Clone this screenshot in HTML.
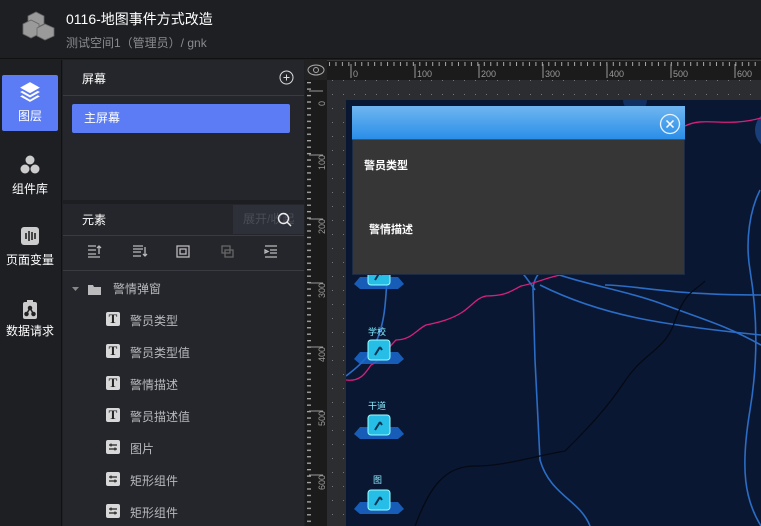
<!DOCTYPE html>
<html><head><meta charset="utf-8"><style>
*{margin:0;padding:0;box-sizing:border-box}
html,body{width:761px;height:526px;overflow:hidden}
body{background:#1f2024;font-family:"Liberation Sans","Noto Sans CJK SC",sans-serif;position:relative;color:#fff}
.abs{position:absolute}
.nav{left:0;top:60px;width:62px;height:466px;background:#1e1f23;border-right:1px solid #111}
.nv{position:absolute;left:2px;width:56px;text-align:center;font-size:12px;color:#fff}
.panel{left:63px;top:60px;width:241px;height:466px;background:#25262b}
.tl{position:absolute;font-size:12px;color:#b8b9bd}
.ti{position:absolute;left:106px;width:14px;height:14px;background:#d8d8d8;border-radius:2px;color:#222;font:bold 13px/14px "Liberation Serif",serif;text-align:center}
</style></head><body>
<div class="abs" style="left:0;top:0;width:761px;height:59px;background:#1e1f23;border-bottom:1px solid #111"></div>
<svg class="abs" style="left:20px;top:10px" width="36" height="34" viewBox="0 0 36 34"><g fill="#9a9a9a" stroke="#666" stroke-width=".8"><path d="M8 6l8-4 8 4v8l-8 4-8-4z"/><path d="M3 14l8-4 8 4v10l-8 4-8-4z"/><path d="M17 18l8-4 9 4v8l-9 4-8-4z"/></g></svg>
<div class="abs" style="left:66px;top:9px;font-size:14px;color:#fff">0116-地图事件方式改造</div>
<div class="abs" style="left:66px;top:34px;font-size:12px;color:#8a8b8f">测试空间1（管理员）/ gnk</div>
<div class="abs nav"></div>
<div class="abs" style="left:2px;top:75px;width:56px;height:56px;background:#5b7cf5;border-radius:2px"></div>
<svg class="abs" style="left:19px;top:81px" width="22" height="22" viewBox="0 0 20 20"><g fill="#fff"><path d="M10 1l9 5-9 5-9-5z"/><path d="M1 10l2-1 7 4 7-4 2 1-9 5z"/><path d="M1 14l2-1 7 4 7-4 2 1-9 5z"/></g></svg>
<div class="nv" style="top:107px">图层</div>
<svg class="abs" style="left:19px;top:155px" width="22" height="20"><g fill="#ccc"><circle cx="11" cy="5" r="4.5"/><circle cx="6" cy="14" r="4.5"/><circle cx="16" cy="14" r="4.5"/></g></svg>
<div class="nv" style="top:180px">组件库</div>
<svg class="abs" style="left:21px;top:227px" width="18" height="18"><rect width="18" height="18" rx="3" fill="#ccc"/><g stroke="#222" stroke-width="1.6"><path d="M5 6v6M8 4v10M11 5v8M14 6v6"/></g></svg>
<div class="nv" style="top:251px">页面变量</div>
<svg class="abs" style="left:22px;top:300px" width="16" height="20"><rect x="1" y="2" width="14" height="17" rx="2" fill="#ccc"/><rect x="5" y="0" width="6" height="4" fill="#ccc"/><g stroke="#222" stroke-width="1.5" fill="#222"><circle cx="8" cy="8" r="1.5"/><circle cx="4.5" cy="14" r="1.5"/><circle cx="11.5" cy="14" r="1.5"/><path d="M8 8L4.5 14M8 8l3.5 6" fill="none"/></g></svg>
<div class="nv" style="top:322px">数据请求</div>
<div class="abs panel"></div>
<div class="abs" style="left:82px;top:70px;font-size:12px">屏幕</div>
<svg class="abs" style="left:279px;top:70px" width="15" height="15"><circle cx="7.5" cy="7.5" r="6.5" fill="none" stroke="#ddd"/><path d="M7.5 4.5v6M4.5 7.5h6" stroke="#ddd"/></svg>
<div class="abs" style="left:63px;top:95px;width:241px;height:1px;background:#3a3b40"></div>
<div class="abs" style="left:72px;top:104px;width:218px;height:29px;background:#5b7cf5;border-radius:2px;font-size:12px;line-height:29px;padding-left:12px">主屏幕</div>
<div class="abs" style="left:63px;top:200px;width:241px;height:4px;background:#1d1e22"></div>
<div class="abs" style="left:82px;top:211px;font-size:12px">元素</div>
<div class="abs" style="left:233px;top:205px;width:71px;height:29px;background:#2d3039;color:#4a4d55;font-size:12px;line-height:29px;padding-left:10px;overflow:hidden;white-space:nowrap">展开/收起</div>
<svg class="abs" style="left:277px;top:212px" width="15" height="15"><circle cx="6.5" cy="6.5" r="5" fill="none" stroke="#eee" stroke-width="1.4"/><path d="M10 10l4 4" stroke="#eee" stroke-width="1.4"/></svg>
<div class="abs" style="left:63px;top:235px;width:241px;height:1px;background:#3a3b40"></div>
<svg class="abs" style="left:85px;top:243px" width="200" height="16"><g stroke="#bbb" stroke-width="1.3" fill="none"><path d="M3 3h8M3 7h8M3 11h8M3 14h12M14 11V3M12 5l2-2 2 2"/><path d="M48 3h10M48 6h10M48 9h8M48 13h8M60 4v9M58 11l2 2 2-2"/><rect x="92" y="3" width="12" height="11"/><rect x="95" y="6" width="6" height="5"/><rect x="137" y="3" width="8" height="7" stroke="#666"/><rect x="140" y="7" width="8" height="7" stroke="#666"/><path d="M180 3h12M185 7h7M185 10h7M180 14h12M180 7l3 1.5-3 1.5z"/></g></svg>
<div class="abs" style="left:63px;top:270px;width:241px;height:1px;background:#3a3b40"></div>
<svg class="abs" style="left:72px;top:284px" width="30" height="12"><path d="M0 3h7l-3.5 4z" fill="#888"/><path d="M16 1h5l1 2h7v8H16z" fill="#bbb"/></svg>
<div class="tl" style="left:113px;top:280px">警情弹窗</div>
<span class="ti" style="top:312px">T</span><div class="tl" style="left:130px;top:312px">警员类型</div>
<span class="ti" style="top:344px">T</span><div class="tl" style="left:130px;top:344px">警员类型值</div>
<span class="ti" style="top:376px">T</span><div class="tl" style="left:130px;top:376px">警情描述</div>
<span class="ti" style="top:408px">T</span><div class="tl" style="left:130px;top:408px">警员描述值</div>
<svg class="abs" style="left:106px;top:440px" width="14" height="14"><rect width="14" height="14" rx="2" fill="#d8d8d8"/><path d="M3 5h8M3 9h8M5 3.5v3M9 7.5v3" stroke="#222" stroke-width="1.2"/></svg><div class="tl" style="left:130px;top:440px">图片</div>
<svg class="abs" style="left:106px;top:472px" width="14" height="14"><rect width="14" height="14" rx="2" fill="#d8d8d8"/><path d="M3 5h8M3 9h8M5 3.5v3M9 7.5v3" stroke="#222" stroke-width="1.2"/></svg><div class="tl" style="left:130px;top:472px">矩形组件</div>
<svg class="abs" style="left:106px;top:504px" width="14" height="14"><rect width="14" height="14" rx="2" fill="#d8d8d8"/><path d="M3 5h8M3 9h8M5 3.5v3M9 7.5v3" stroke="#222" stroke-width="1.2"/></svg><div class="tl" style="left:130px;top:504px">矩形组件</div>
<div class="abs" style="left:305px;top:60px;width:456px;height:466px;background:#2b2d31"></div>
<svg class="abs" style="left:305px;top:60px" width="456" height="466">
<defs>
<pattern id="ht" x="22" width="6.45" height="20" patternUnits="userSpaceOnUse"><rect x="2" y="2" width="1" height="4" fill="#aaa"/></pattern>
<pattern id="vt" y="20" width="22" height="6.45" patternUnits="userSpaceOnUse"><rect x="2" y="2" width="4" height="1.3" fill="#aaa"/></pattern>
<pattern id="dots" x="0" y="0" width="11" height="14" patternUnits="userSpaceOnUse"><rect x="5" y="6" width="1" height="1" fill="#777"/></pattern>
<clipPath id="mc"><rect x="41" y="40" width="415" height="426"/></clipPath>
</defs>
<rect x="0" y="0" width="22" height="466" fill="#1b1b1c"/>
<rect x="0" y="0" width="456" height="20" fill="#1b1b1c"/>
<rect x="0" y="0" width="456" height="1" fill="#3a3a3a"/>
<rect x="22" y="20" width="434" height="446" fill="url(#dots)"/>
<rect x="22" y="0" width="434" height="12" fill="url(#ht)"/>
<rect x="0" y="20" width="11" height="446" fill="url(#vt)"/>
<g stroke="#999"><path d="M46 4v14M110 4v14M174 4v14M238 4v14M302 4v14M366 4v14M430 4v14"/><path d="M4 31h14M4 95h14M4 159h14M4 223h14M4 287h14M4 351h14M4 415h14"/></g>
<g fill="#999" font-size="9" font-family="Liberation Sans"><text x="48" y="17">0</text><text x="112" y="17">100</text><text x="176" y="17">200</text><text x="240" y="17">300</text><text x="304" y="17">400</text><text x="368" y="17">500</text><text x="432" y="17">600</text>
<g transform="rotate(-90)"><text x="-46" y="20">0</text><text x="-110" y="20">100</text><text x="-174" y="20">200</text><text x="-238" y="20">300</text><text x="-302" y="20">400</text><text x="-366" y="20">500</text><text x="-430" y="20">600</text></g></g>
<rect x="0" y="0" width="22" height="20" fill="#222"/>
<ellipse cx="11" cy="10" rx="8" ry="5" fill="none" stroke="#aaa"/><circle cx="11" cy="10" r="2.5" fill="none" stroke="#aaa"/>
<rect x="41" y="40" width="415" height="426" fill="#0a1733"/>
<g clip-path="url(#mc)">
<circle cx="470" cy="70" r="20" fill="#1a3f78"/>
<circle cx="330" cy="40" r="12" fill="#123062"/>
<g fill="none" stroke="#2b6cc4" stroke-width="1.6">
<path d="M285 466C275 440 245 435 235 400L230 300L228 230C228 215 240 205 260 190"/>
<path d="M235 225c60 30 120 40 221 50"/>
<path d="M240 210c40 15 80 20 120 35 40 15 60 20 96 40"/>
<path d="M300 225c30 0 60 10 156 10"/>
<path d="M455 130c-10 20-15 50-10 80s10 80 0 140-5 90 11 116"/>
<path d="M41 316c20-15 35-30 39-70s2-80 5-140"/>
<path d="M230 230c-20-30-40-40-50-120"/>
</g>
<path d="M110 466c15-40 30-60 60-60s60-10 90-15c20-20 40-40 60-70s40-30 50-60 20-30 30-40" fill="none" stroke="#050a14" stroke-width="1.3"/>
<path d="M41 320c15 2 20-8 25-15 10-5 15-15 25-25 15 0 20-10 30-15 15-3 25-6 35-12 10-6 15-15 25-17 20 0 25-5 35-10 15-3 25-8 35-10 20-5 30-10 40-12 10-10 10-25 5-30M380 66c20-10 40 2 76-8" fill="none" stroke="#d8207a" stroke-width="1.3"/>
</g>
<g>
<g transform="translate(49,205)"><path d="M0 19l6-7h38l6 7-6 5H6z" fill="#1a6ad0" opacity=".85"/><rect x="14" y="0" width="22" height="20" rx="3" fill="#26bde6" stroke="#9ff"/><path d="M21 15l5-8m0 0l2 3" stroke="#0a3350" stroke-width="2" fill="none"/></g>
<g transform="translate(49,280)"><path d="M0 19l6-7h38l6 7-6 5H6z" fill="#1a6ad0" opacity=".85"/><rect x="14" y="0" width="22" height="20" rx="3" fill="#26bde6" stroke="#9ff"/><path d="M21 15l5-8m0 0l2 3" stroke="#0a3350" stroke-width="2" fill="none"/></g>
<g transform="translate(49,355)"><path d="M0 19l6-7h38l6 7-6 5H6z" fill="#1a6ad0" opacity=".85"/><rect x="14" y="0" width="22" height="20" rx="3" fill="#26bde6" stroke="#9ff"/><path d="M21 15l5-8m0 0l2 3" stroke="#0a3350" stroke-width="2" fill="none"/></g>
<g transform="translate(49,430)"><path d="M0 19l6-7h38l6 7-6 5H6z" fill="#1a6ad0" opacity=".85"/><rect x="14" y="0" width="22" height="20" rx="3" fill="#26bde6" stroke="#9ff"/><path d="M21 15l5-8m0 0l2 3" stroke="#0a3350" stroke-width="2" fill="none"/></g>
</g>
<g fill="#8ef" font-size="9" font-family="Liberation Sans,Noto Sans CJK SC"><text x="63" y="275">学校</text><text x="63" y="349">干道</text><text x="68" y="423">图</text></g>
</svg>
<div class="abs" style="left:352px;top:106px;width:333px;height:169px;background:#363636;border:1px solid #1d2a44"></div>
<div class="abs" style="left:352px;top:106px;width:333px;height:34px;background:linear-gradient(#6fb6f0,#2a8ee8);border-bottom:1px solid #1a5aa0"></div>
<svg class="abs" style="left:659px;top:113px" width="22" height="22"><circle cx="11" cy="11" r="9.5" fill="none" stroke="#e8f2ff" stroke-width="1.3"/><path d="M7.5 7.5l7 7M14.5 7.5l-7 7" stroke="#fff" stroke-width="1.5"/></svg>
<div class="abs" style="left:364px;top:157px;font-size:11px;font-weight:bold">警员类型</div>
<div class="abs" style="left:369px;top:221px;font-size:11px;font-weight:bold">警情描述</div>
</body></html>
